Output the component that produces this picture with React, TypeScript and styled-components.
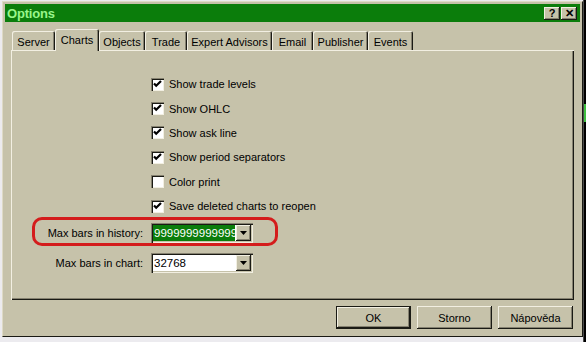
import styled, { createGlobalStyle } from "styled-components";

const face = "#c6c2aa";
const light = "#f2efe2";
const shade = "#858170";
const dark = "#1a1a14";

const GlobalStyle = createGlobalStyle`
  html, body {
    margin: 0;
    padding: 0;
  }
  body {
    width: 586px;
    height: 342px;
    overflow: hidden;
    background: #ecebef;
    font-family: "Liberation Sans", Arial, sans-serif;
    font-size: 11px;
    color: #000;
  }
`;

const Screen = styled.div`
  width: 586px;
  height: 342px;
  display: grid;
  grid-template-columns: 2px 581px 3px;
  grid-template-rows: 1px 336px 5px;
`;

const ChartEdge = styled.div`
  grid-column: 3;
  grid-row: 1 / span 3;
  background: linear-gradient(
    to bottom,
    #000 0 104px,
    #3fbf3f 104px 122px,
    #000 122px 100%
  );
  box-shadow: inset 1px 0 #4a4a4a;
`;

const Dialog = styled.div`
  grid-column: 2;
  grid-row: 2;
  box-sizing: border-box;
  background: ${face};
  border: 1px solid;
  border-color: #dedac6 ${dark} ${dark} #dedac6;
  padding: 2px;
  display: flex;
  flex-direction: column;
`;

const TitleBar = styled.div`
  flex: 0 0 18px;
  background: #0b7d0b;
  display: flex;
  align-items: center;
  padding: 0 3px 0 2px;
`;

const Title = styled.span`
  flex: 1;
  color: #98f58a;
  font-weight: bold;
  font-size: 13px;
  letter-spacing: -0.2px;
`;

const TitleButton = styled.button`
  width: 16px;
  height: 13px;
  margin-left: 1px;
  padding: 0;
  border: none;
  background: ${face};
  box-shadow: inset -1px -1px ${dark}, inset 1px 1px ${light},
    inset -2px -2px ${shade};
  font-family: "Liberation Sans", Arial, sans-serif;
  font-weight: bold;
  font-size: 11px;
  line-height: 13px;
  color: #000;
`;

const Body = styled.div`
  flex: 1;
  display: flex;
  flex-direction: column;
  padding: 7px 6px 5px;
`;

const TabStrip = styled.div`
  flex: 0 0 21px;
  display: flex;
  align-items: flex-end;
  padding-left: 1px;
  position: relative;
  z-index: 1;
`;

const Tab = styled.div<{ $w: number; $active?: boolean }>`
  box-sizing: border-box;
  width: ${({ $w }) => $w}px;
  height: ${({ $active }) => ($active ? 22 : 19)}px;
  margin-bottom: ${({ $active }) => ($active ? -1 : 0)}px;
  display: flex;
  align-items: center;
  justify-content: center;
  padding-top: ${({ $active }) => ($active ? 0 : 2)}px;
  background: ${face};
  border-radius: 2px 2px 0 0;
  box-shadow: inset 1px 1px ${light}, inset -1px 0 ${dark},
    inset -2px 0 ${shade};
  white-space: nowrap;
`;

const Panel = styled.div`
  position: relative;
  box-sizing: border-box;
  flex: 0 0 250px;
  padding: 22px 0 0 140px;
  box-shadow: inset 1px 1px ${light}, inset -1px -1px ${dark},
    inset -2px -2px ${shade};
`;

const CheckRow = styled.label`
  height: 24.4px;
  display: flex;
  align-items: center;
  gap: 5px;
`;

const Box = styled.span`
  box-sizing: border-box;
  width: 13px;
  height: 13px;
  background: #fff;
  box-shadow: inset 1px 1px ${shade}, inset 2px 2px ${dark},
    inset -1px -1px ${light};
  display: flex;
  align-items: center;
  justify-content: center;
`;

const FormGrid = styled.div`
  margin: 5px 0 0 -140px;
  display: grid;
  grid-template-columns: 132px 102px;
  grid-auto-rows: 20px;
  column-gap: 8px;
  row-gap: 10px;
  align-items: center;
`;

const FieldLabel = styled.span`
  text-align: right;
`;

const Combo = styled.div`
  box-sizing: border-box;
  height: 20px;
  padding: 2px;
  background: #fff;
  display: flex;
  box-shadow: inset 1px 1px ${shade}, inset 2px 2px ${dark},
    inset -1px -1px ${light}, inset -2px -2px ${face};
`;

const Value = styled.div<{ $selected?: boolean }>`
  flex: 1;
  min-width: 0;
  overflow: hidden;
  white-space: nowrap;
  line-height: 16px;
  padding-left: 1px;
  margin-right: 1px;
  font-size: 11.5px;
  background: ${({ $selected }) => ($selected ? "#0b7d0b" : "transparent")};
  color: ${({ $selected }) => ($selected ? "#fff" : "#000")};
`;

const DropButton = styled.div`
  width: 15px;
  height: 16px;
  background: ${face};
  box-shadow: inset -1px -1px ${dark}, inset 1px 1px ${light},
    inset -2px -2px ${shade};
  display: flex;
  align-items: center;
  justify-content: center;
`;

const Highlight = styled.div`
  position: absolute;
  left: 21px;
  top: 167px;
  width: 246px;
  height: 29px;
  box-sizing: border-box;
  border: 3px solid #d41c1c;
  border-radius: 10px;
  pointer-events: none;
`;

const ButtonRow = styled.div`
  margin-top: 6px;
  display: flex;
  justify-content: flex-end;
  gap: 6px;
  padding-right: 1px;
`;

const Button = styled.button<{ $default?: boolean }>`
  box-sizing: border-box;
  width: 75px;
  height: 23px;
  padding: 0;
  background: ${face};
  border: ${({ $default }) => ($default ? `1px solid ${dark}` : "none")};
  box-shadow: inset -1px -1px ${dark}, inset 1px 1px ${light},
    inset -2px -2px ${shade};
  font-family: "Liberation Sans", Arial, sans-serif;
  font-size: 11px;
  color: #000;
`;

const tabs: [string, number][] = [
  ["Server", 43],
  ["Charts", 44],
  ["Objects", 46],
  ["Trade", 42],
  ["Expert Advisors", 85],
  ["Email", 41],
  ["Publisher", 55],
  ["Events", 45],
];

const options: [string, boolean][] = [
  ["Show trade levels", true],
  ["Show OHLC", true],
  ["Show ask line", true],
  ["Show period separators", true],
  ["Color print", false],
  ["Save deleted charts to reopen", true],
];

function Check() {
  return (
    <svg width="9" height="9" viewBox="0 0 9 9">
      <path
        d="M1 3.5 L3.2 5.8 L8 1"
        fill="none"
        stroke="#000"
        strokeWidth="2.2"
      />
    </svg>
  );
}

function Arrow() {
  return (
    <svg width="7" height="4" viewBox="0 0 7 4">
      <path d="M0 0 H7 L3.5 4 Z" fill="#000" />
    </svg>
  );
}

export default function App() {
  return (
    <>
      <GlobalStyle />
      <Screen>
        <Dialog>
          <TitleBar>
            <Title>Options</Title>
            <TitleButton>?</TitleButton>
            <TitleButton>✕</TitleButton>
          </TitleBar>
          <Body>
            <TabStrip>
              {tabs.map(([name, w]) => (
                <Tab key={name} $w={w} $active={name === "Charts"}>
                  {name}
                </Tab>
              ))}
            </TabStrip>
            <Panel>
              {options.map(([label, checked]) => (
                <CheckRow key={label}>
                  <Box>{checked && <Check />}</Box>
                  {label}
                </CheckRow>
              ))}
              <FormGrid>
                <FieldLabel>Max bars in history:</FieldLabel>
                <Combo>
                  <Value $selected>99999999999999</Value>
                  <DropButton>
                    <Arrow />
                  </DropButton>
                </Combo>
                <FieldLabel>Max bars in chart:</FieldLabel>
                <Combo>
                  <Value>32768</Value>
                  <DropButton>
                    <Arrow />
                  </DropButton>
                </Combo>
              </FormGrid>
              <Highlight />
            </Panel>
            <ButtonRow>
              <Button $default>OK</Button>
              <Button>Storno</Button>
              <Button>Nápověda</Button>
            </ButtonRow>
          </Body>
        </Dialog>
        <ChartEdge />
      </Screen>
    </>
  );
}
